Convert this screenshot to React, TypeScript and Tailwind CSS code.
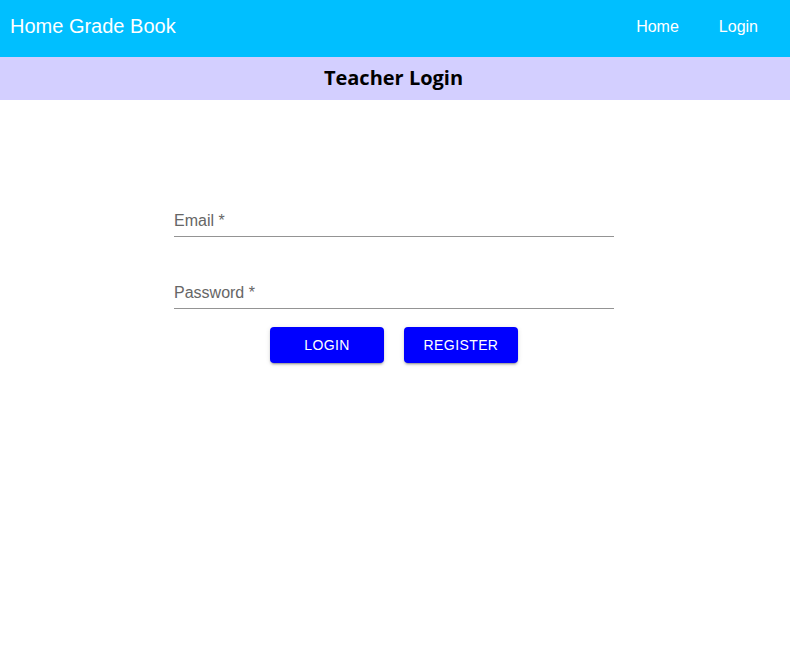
export default function App() {
  return (
    <div className="min-h-[656px] bg-white" style={{ fontFamily: '"Liberation Sans", Arial, sans-serif' }}>
      <header className="h-[57px] bg-[#00bfff] flex items-center justify-between pl-[10px] pr-[32px]">
        <div className="text-white text-[20px] -mt-[6px]">Home Grade Book</div>
        <nav className="flex items-center gap-[40px] text-white text-[16px] -mt-[4px]">
          <span>Home</span>
          <span>Login</span>
        </nav>
      </header>
      <div className="h-[43px] bg-[#d3cfff] flex items-center justify-center">
        <h1 className="text-[20px] font-bold text-black -mt-[1px] ml-[-3px]" style={{ fontFamily: '"Open Sans", "DejaVu Sans", sans-serif' }}>
          Teacher Login
        </h1>
      </div>
      <div className="flex flex-col items-center pt-[105px] pr-[2px]">
        <div className="w-[440px]">
          <div className="h-[32px] border-b border-[#949494] flex items-end pb-[3px]">
            <span className="text-[16px] text-[#666666]">Email *</span>
          </div>
          <div className="h-[32px] mt-[40px] border-b border-[#949494] flex items-end pb-[3px]">
            <span className="text-[16px] text-[#666666]">Password *</span>
          </div>
        </div>
        <div className="flex gap-[20px] mt-[18px]">
          <button className="w-[114px] h-[36px] bg-[#0000ff] rounded-[4px] text-white text-[14px] tracking-[0.4px] shadow-[0_3px_1px_-2px_rgba(0,0,0,0.2),0_2px_2px_0_rgba(0,0,0,0.14),0_1px_5px_0_rgba(0,0,0,0.12)]">
            LOGIN
          </button>
          <button className="w-[114px] h-[36px] bg-[#0000ff] rounded-[4px] text-white text-[14px] tracking-[0.4px] shadow-[0_3px_1px_-2px_rgba(0,0,0,0.2),0_2px_2px_0_rgba(0,0,0,0.14),0_1px_5px_0_rgba(0,0,0,0.12)]">
            REGISTER
          </button>
        </div>
      </div>
    </div>
  );
}
